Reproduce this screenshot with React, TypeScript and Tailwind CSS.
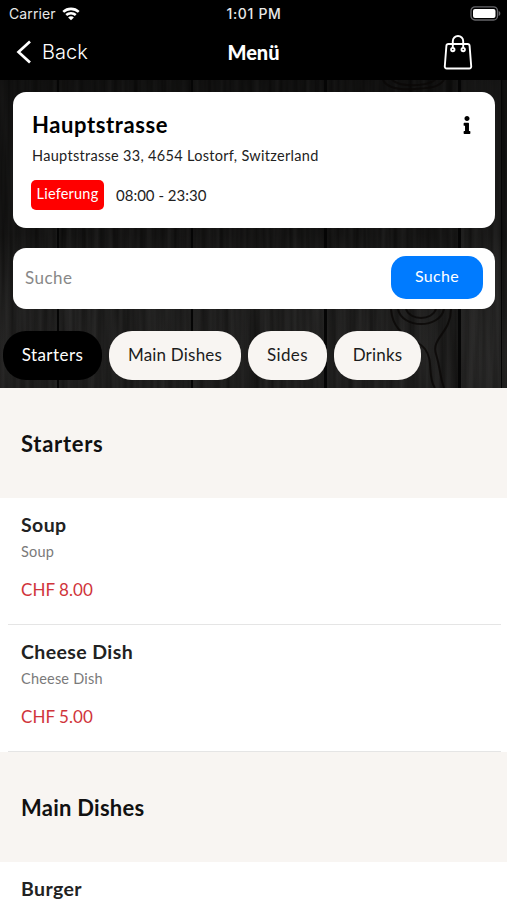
import { useState } from "react";
import { FaInfo } from "react-icons/fa";

const categories = [
  { name: "Starters", size: "w-[99px]", tracking: "tracking-[0.45px]" },
  { name: "Main Dishes", size: "w-[132px]", tracking: "tracking-[0.2px]" },
  { name: "Sides", size: "w-[79px]", tracking: "tracking-[0.35px]" },
  { name: "Drinks", size: "w-[87px]", tracking: "tracking-[0.2px]" },
];

type Item = { name: string; description?: string; price?: string };

const menu: { title: string; items: Item[] }[] = [
  {
    title: "Starters",
    items: [
      { name: "Soup", description: "Soup", price: "CHF 8.00" },
      { name: "Cheese Dish", description: "Cheese Dish", price: "CHF 5.00" },
    ],
  },
  {
    title: "Main Dishes",
    items: [{ name: "Burger" }],
  },
];

function StatusBar() {
  return (
    <div className="grid h-[27px] grid-cols-3 items-center pl-[9px] pr-[6px] font-['Inter',sans-serif] text-[14px] leading-none text-[#e8e8e8]">
      <div className="flex items-center gap-[6px]">
        <span className="tracking-[0.1px]">Carrier</span>
        <svg width="18" height="14" viewBox="0 0 19 15" fill="none" stroke="#fff" strokeWidth="2.7">
          <path d="M1.2 5.3C5.8 .9 13.2 .9 17.8 5.3" />
          <path d="M4.4 8.6C7.2 5.9 11.8 5.9 14.6 8.6" />
          <path d="M9.5 14.2 6.4 11.2C8.1 9.6 10.9 9.6 12.6 11.2Z" fill="#fff" stroke="none" />
        </svg>
      </div>
      <span className="-ml-[2px] text-center font-medium tracking-[0.65px]">1:01 PM</span>
      <svg className="justify-self-end" width="31" height="15" viewBox="0 0 31 15">
        <rect x="1" y="0.8" width="26.5" height="13.2" rx="4" fill="none" stroke="#66666a" strokeWidth="1.3" />
        <rect x="3" y="2.9" width="22.5" height="9" rx="2" fill="#fff" />
        <path d="M28.7 5v5c2.2-.8 2.2-4.2 0-5Z" fill="#66666a" />
      </svg>
    </div>
  );
}

function NavBar() {
  return (
    <div className="grid h-[53px] grid-cols-3 items-center pb-[3px] pl-[16px] pr-[34px]">
      <button className="flex items-center gap-[10px] font-['Inter',sans-serif] text-[20px] font-light text-white">
        <svg width="16" height="24" viewBox="0 0 16 24" fill="none" stroke="#fff" strokeWidth="2.7">
          <path d="M14 1.4 2.5 12 14 22.6" />
        </svg>
        Back
      </button>
      <h1 className="pl-[18px] text-center text-[20px] font-black leading-6 text-white">Menü</h1>
      <svg className="justify-self-end" width="30" height="36" viewBox="0 0 30 36" fill="none" stroke="#fff" strokeWidth="1.9">
        <path d="M5.4 10h19.2a2 2 0 0 1 2 1.8l1.6 20.4a2 2 0 0 1-2 2.3H3.8a2 2 0 0 1-2-2.3l1.6-20.4A2 2 0 0 1 5.4 10Z" />
        <path d="M9.8 14V7.2a5.2 5.2 0 0 1 10.4 0V14" />
        <circle cx="9.8" cy="15.6" r="1.7" />
        <circle cx="20.2" cy="15.6" r="1.7" />
      </svg>
    </div>
  );
}

// dark planks behind the restaurant card
function WoodBackground() {
  return (
    <svg className="absolute inset-0 h-full w-full" viewBox="0 0 507 308" preserveAspectRatio="none">
      <filter id="grain" x="0" y="0" width="100%" height="100%" colorInterpolationFilters="sRGB">
        <feTurbulence type="fractalNoise" baseFrequency="0.15 0.006" numOctaves="3" seed="7" />
        <feColorMatrix values="0.12 0 0 0 0.03  0.12 0 0 0 0.028  0.12 0 0 0 0.025  0 0 0 0 1" />
      </filter>
      <linearGradient id="shade" x1="0" y1="0" x2="0" y2="1">
        <stop offset="0" stopColor="#000" stopOpacity="0.3" />
        <stop offset="0.5" stopColor="#000" stopOpacity="0.12" />
        <stop offset="1" stopColor="#fff" stopOpacity="0.03" />
      </linearGradient>
      <rect width="507" height="308" filter="url(#grain)" />
      <rect width="507" height="308" fill="url(#shade)" />
      <g fill="#050505">
        <rect x="57" width="2" height="308" />
        <rect x="191" width="2" height="308" />
        <rect x="324" width="3" height="308" />
        <rect x="458" width="3" height="308" />
        <rect x="501" width="1" height="308" />
      </g>
      <rect x="461" width="40" height="308" fill="#fff" opacity="0.025" />
      <g fill="none" stroke="#0a0806" strokeWidth="2" opacity="0.8">
        <path d="M398 229c4 20 42 20 46 0M406 229c4 12 26 12 30 0M391 229c2 28 25 28 34 40s2 28 10 39M451 229c0 24-20 29-15 45s3 20 8 34" />
        <path d="M383 0c4 8 18 10 32 9s23-1 29-9M392 0c8 7 34 7 43 0" />
      </g>
    </svg>
  );
}

export default function App() {
  const [active, setActive] = useState("Starters");
  const [search, setSearch] = useState("");

  return (
    <div className="h-[900px] w-full overflow-hidden bg-white font-['Lato',sans-serif] text-[#222]">
      <header className="bg-black">
        <StatusBar />
        <NavBar />
      </header>

      <section className="relative h-[308px]">
        <WoodBackground />
        <div className="relative pt-[12px]">
          <div className="ml-[13px] mr-[12px] h-[136px] rounded-[13px] bg-white pl-[19px] pr-[23px] pt-[20px]">
            <div className="flex items-center justify-between">
              <h2 className="text-[22px] font-bold leading-[26px] tracking-[0.6px] text-black">Hauptstrasse</h2>
              <FaInfo className="h-[18px] w-[10px] text-black" />
            </div>
            <p className="mt-[9px] text-[14.5px] leading-[18px] tracking-[0.3px]">
              Hauptstrasse 33, 4654 Lostorf, Switzerland
            </p>
            <div className="mt-[15px] flex items-center gap-[12px]">
              <span className="-ml-px flex h-[30px] w-[73px] items-center justify-center rounded-[5px] bg-[#ff0000] pb-[2px] text-[14.5px] tracking-[0.2px] text-white">
                Lieferung
              </span>
              <span className="text-[15px]">08:00 - 23:30</span>
            </div>
          </div>

          <div className="ml-[13px] mr-[12px] mt-[20px] flex h-[61px] items-center rounded-[13px] bg-white px-[12px]">
            <input
              className="min-w-0 flex-1 pb-[2px] text-[17px] tracking-[0.45px] outline-none placeholder:text-[#888]"
              placeholder="Suche"
              value={search}
              onChange={(e) => setSearch(e.target.value)}
            />
            <button className="mb-[2px] h-[43px] w-[92px] rounded-[15px] bg-[#007bff] pb-[3px] text-[16px] tracking-[0.3px] text-white">
              Suche
            </button>
          </div>

          <div className="mt-[22px] flex gap-[7px] pl-[3px]">
            {categories.map((category) => (
              <button
                key={category.name}
                onClick={() => setActive(category.name)}
                className={`h-[49px] shrink-0 rounded-[23px] pb-[2px] text-[17px] ${category.size} ${category.tracking} ${
                  active === category.name ? "bg-black text-white" : "bg-[#f8f5f2] text-[#1c1c1c]"
                }`}
              >
                {category.name}
              </button>
            ))}
          </div>
        </div>
      </section>

      <main>
        {menu.map((section) => (
          <section key={section.title}>
            <h2
              className={`flex h-[110px] items-center bg-[#f8f5f2] pl-[21px] text-[22px] font-bold text-[#111] ${
                section.title === "Starters" ? "tracking-[0.7px]" : "tracking-[0.25px]"
              }`}
            >
              {section.title}
            </h2>
            {section.items.map((item) => (
              <div key={item.name} className="ml-[8px] mr-[6px] h-[127px] border-b border-[#e5e5e5] pl-[13px] pt-[15px]">
                <h3 className="text-[19.5px] font-bold leading-[24px] tracking-[0.4px]">{item.name}</h3>
                {item.description && (
                  <p className="mt-[5px] text-[14.5px] leading-[20px] tracking-[0.2px] text-[#7a7a7a]">{item.description}</p>
                )}
                {item.price && (
                  <p className="mt-[16px] text-[17px] leading-[24px] tracking-[0.05px] text-[#d0343a]">{item.price}</p>
                )}
              </div>
            ))}
          </section>
        ))}
      </main>
    </div>
  );
}
